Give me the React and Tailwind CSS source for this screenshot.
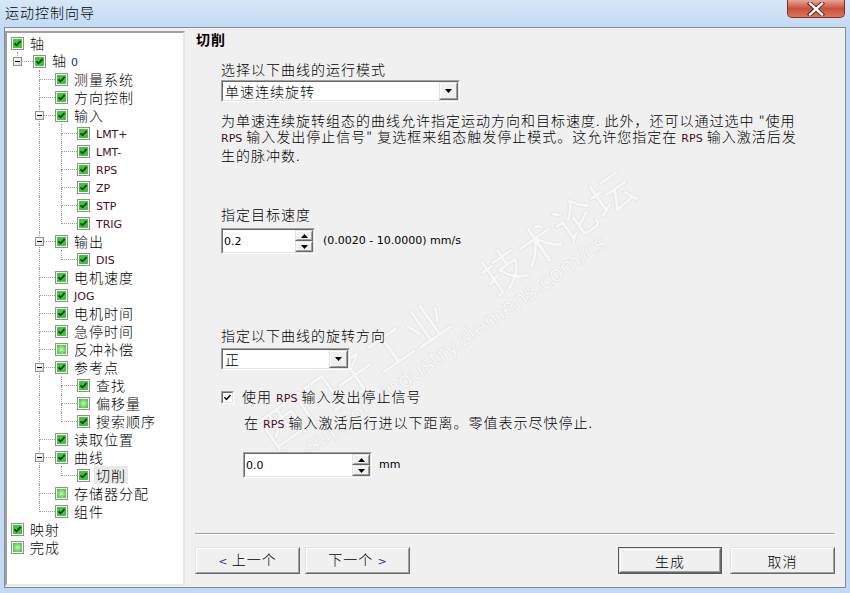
import React from 'react';

const latin = "font-['DejaVu_Sans',sans-serif] text-[11px] tracking-normal font-normal";

// tree data for the wizard navigation
const tree = [
  {
    label: '轴',
    checked: true,
    children: [
      {
        label: '轴 0',
        checked: true,
        children: [
          { label: '测量系统', checked: true },
          { label: '方向控制', checked: true },
          {
            label: '输入',
            checked: true,
            children: [
              { label: 'LMT+', checked: true },
              { label: 'LMT-', checked: true },
              { label: 'RPS', checked: true },
              { label: 'ZP', checked: true },
              { label: 'STP', checked: true },
              { label: 'TRIG', checked: true },
            ],
          },
          { label: '输出', checked: true, children: [{ label: 'DIS', checked: true }] },
          { label: '电机速度', checked: true },
          { label: 'JOG', checked: true },
          { label: '电机时间', checked: true },
          { label: '急停时间', checked: true },
          { label: '反冲补偿', checked: false },
          {
            label: '参考点',
            checked: true,
            children: [
              { label: '查找', checked: true },
              { label: '偏移量', checked: false },
              { label: '搜索顺序', checked: true },
            ],
          },
          { label: '读取位置', checked: true },
          { label: '曲线', checked: true, children: [{ label: '切削', checked: true, selected: true }] },
          { label: '存储器分配', checked: false },
          { label: '组件', checked: true },
        ],
      },
    ],
  },
  { label: '映射', checked: true },
  { label: '完成', checked: false },
];

function flatten(nodes, level, guides, out) {
  nodes.forEach((n, i) => {
    const last = i === nodes.length - 1;
    out.push({ ...n, level, guides, last });
    if (n.children) {
      flatten(n.children, level + 1, level === 0 ? [] : [...guides, !last], out);
    }
  });
  return out;
}

// splits latin runs out of a label so they get the small sans face
function Label({ text, latinClass = 'text-[#4a0c24]' }) {
  const parts = text.split(/([A-Za-z0-9+\-]+)/);
  return parts.map((p, i) =>
    /^[A-Za-z0-9+\-]+$/.test(p) ? (
      <span key={i} className={`${latin} ${latinClass}`}>
        {p}
      </span>
    ) : (
      <span key={i} className="text-black">{p}</span>
    )
  );
}

function TreeCheck({ checked }) {
  return (
    <div className="w-[13px] h-[13px] shrink-0 border border-[#8f8f8f] bg-white p-px">
      {checked ? (
        <div className="w-full h-full bg-[#3fc53a] flex items-center justify-center">
          <svg width="9" height="9" viewBox="0 0 9 9">
            <path d="M1.5 4.3 L3.6 6.4 L7.6 2.2" fill="none" stroke="#0b3f0b" strokeWidth="1.7" />
          </svg>
        </div>
      ) : (
        <div className="w-full h-full bg-[radial-gradient(circle,#c9f5b9_0%,#6fd962_55%,#34bd2e_100%)]" />
      )}
    </div>
  );
}

function Connector({ last, expander }) {
  return (
    <div className="relative w-[22px] h-full shrink-0">
      <div className="ml-[6px] w-[16px] h-[10px] border-l border-b border-dotted border-[#a0a0a0]" />
      {!last && <div className="ml-[6px] h-[8px] border-l border-dotted border-[#a0a0a0]" />}
      {expander && (
        <div className="absolute left-[2px] top-[5px] w-[9px] h-[9px] border border-[#919191] bg-gradient-to-br from-white to-[#dcdcdc] flex items-center justify-center">
          <div className="w-[5px] h-px bg-black" />
        </div>
      )}
    </div>
  );
}

function TreeRow({ row }) {
  return (
    <div className="flex items-center h-[18px] leading-[18px]">
      {row.guides.map((g, i) => (
        <div key={i} className="w-[22px] h-full shrink-0">
          {g && <div className="ml-[6px] h-full border-l border-dotted border-[#a0a0a0]" />}
        </div>
      ))}
      {row.level > 0 && <Connector last={row.last} expander={!!row.children} />}
      <TreeCheck checked={row.checked} />
      <span className={`ml-[4px] px-[2px] whitespace-nowrap ${row.selected ? 'bg-[#e9e9e9]' : ''}`}>
        <Label text={row.label} latinClass={row.label === '轴 0' ? 'text-[#16307a]' : 'text-[#4a0c24]'} />
      </span>
    </div>
  );
}

function Sunken({ className = '', children }) {
  return (
    <div className={`border border-t-[#a0a0a0] border-l-[#a0a0a0] border-b-white border-r-white ${className}`}>
      <div className="w-full h-full flex bg-white border border-t-[#696969] border-l-[#696969] border-b-[#e3e3e3] border-r-[#e3e3e3]">
        {children}
      </div>
    </div>
  );
}

function Raised({ className = '', children }) {
  return (
    <div className={`bg-[#f0f0f0] border border-t-[#e3e3e3] border-l-[#e3e3e3] border-b-[#696969] border-r-[#696969] ${className}`}>
      <div className="w-full h-full flex items-center justify-center border border-t-white border-l-white border-b-[#a0a0a0] border-r-[#a0a0a0]">
        {children}
      </div>
    </div>
  );
}

function Tri({ up, color = '#000' }) {
  return (
    <svg width="7" height="4" viewBox="0 0 7 4">
      <path d={up ? 'M0 4 L3.5 0 L7 4 Z' : 'M0 0 L7 0 L3.5 4 Z'} fill={color} />
    </svg>
  );
}

function Dropdown({ width, value }) {
  return (
    <Sunken className={`${width} h-[22px]`}>
      <div className="flex-1 pl-[2px] leading-[18px] whitespace-nowrap">{value}</div>
      <Raised className="w-[19px] h-full">
        <Tri />
      </Raised>
    </Sunken>
  );
}

function Spinner({ width, value }) {
  return (
    <Sunken className={`${width} h-[26px]`}>
      <div className={`flex-1 pl-px pt-[4px] ${latin}`}>{value}</div>
      <div className="w-[18px] flex flex-col">
        <Raised className="flex-1">
          <Tri up />
        </Raised>
        <Raised className="flex-1">
          <Tri />
        </Raised>
      </div>
    </Sunken>
  );
}

function Button({ width, children, isDefault }) {
  const inner = (
    <Raised className="w-full h-full">
      <span className="leading-[18px] whitespace-nowrap">{children}</span>
    </Raised>
  );
  return isDefault ? (
    <div className={`${width} h-[27px] border border-[#5a5a5a]`}>{inner}</div>
  ) : (
    <div className={`${width} h-[27px]`}>{inner}</div>
  );
}

function CloseButton() {
  return (
    <div className="ml-auto mr-[5px] w-[58px] h-[18px] rounded-b-[5px] border border-t-0 border-[#8a2c22] bg-gradient-to-b from-[#e8a597] via-[#c9503e] to-[#d9765a] flex items-center justify-center">
      <svg width="20" height="14" viewBox="0 0 20 14">
        <path d="M4 1.5 L16 12.5 M16 1.5 L4 12.5" stroke="#4a1a14" strokeWidth="4.2" strokeLinecap="square" />
        <path d="M4 1.5 L16 12.5 M16 1.5 L4 12.5" stroke="#ffffff" strokeWidth="2.4" strokeLinecap="square" />
      </svg>
    </div>
  );
}

const rps = <span className={`${latin} text-[10px] text-[#4a0c24]`}>RPS</span>;

export default function App() {
  const rows = flatten(tree, 0, [], []);

  return (
    <div className="w-[850px] h-[593px] overflow-hidden flex flex-col bg-[#c3daf2] text-black text-[14px] tracking-[1px] font-light font-['Noto_Sans_CJK_SC','Noto_Sans',sans-serif]">
      {/* title bar */}
      <div className="h-[27px] shrink-0 flex items-start bg-gradient-to-b from-[#d6e7f8] to-[#c3daf2]">
        <div className="pl-[5px] pt-[3px] leading-[18px]">运动控制向导</div>
        <CloseButton />
      </div>

      {/* client area */}
      <div className="flex-1 min-h-0 mx-[4px] mb-[5px] flex bg-[#f0f0f0] border border-[#7f8c9b]">
        {/* tree */}
        <div className="w-[180px] mt-[3px] mb-px shrink-0 bg-white border-2 border-t-[#a0a0a0] border-l-[#a0a0a0] border-b-[#e8e8e8] border-r-[#e8e8e8]">
          <div className="pl-[4px] pt-px">
            {rows.map((r, i) => (
              <TreeRow key={i} row={r} />
            ))}
          </div>
        </div>

        {/* page */}
        <div className="relative flex-1 flex flex-col overflow-hidden">
          {/* watermark */}
          <div className="pointer-events-none absolute left-[105px] top-[375px] origin-bottom-left -rotate-[35deg] whitespace-nowrap text-[#f7f7f7] [text-shadow:0_0_1px_rgba(0,0,0,0.22)] tracking-normal font-normal">
            <div className="text-[44px] leading-[48px]">
              西门子工业<span className="ml-[50px]">技术论坛</span>
            </div>
            <div className="ml-[30px] font-['DejaVu_Sans',sans-serif] text-[22px] leading-[24px]">
              support.industry.siemens.com/cs
            </div>
          </div>

          <div className="relative pl-[11px] pt-[2px] font-bold leading-[18px]">切削</div>

          <div className="relative pl-[36px] flex flex-col items-start">
            <div className="mt-[12px] leading-[18px]">选择以下曲线的运行模式</div>
            <div className="mt-[2px]">
              <Dropdown width="w-[239px]" value="单速连续旋转" />
            </div>

            <div className="mt-[10px] leading-[16px] whitespace-nowrap">
              为单速连续旋转组态的曲线允许指定运动方向和目标速度. 此外，还可以通过选中 "使用
              <br />
              {rps} 输入发出停止信号" 复选框来组态触发停止模式。这允许您指定在 {rps} 输入激活后发
              <br />
              生的脉冲数.
            </div>

            <div className="mt-[42px] leading-[18px]">指定目标速度</div>
            <div className="mt-[5px] flex items-center">
              <Spinner width="w-[94px]" value="0.2" />
              <span className={`ml-[8px] ${latin}`}>(0.0020 - 10.0000) mm/s</span>
            </div>

            <div className="mt-[72px] leading-[18px]">指定以下曲线的旋转方向</div>
            <div className="mt-[4px]">
              <Dropdown width="w-[129px]" value="正" />
            </div>

            <div className="mt-[18px] flex items-center h-[18px]">
              <Sunken className="w-[13px] h-[13px]">
                <svg width="9" height="9" viewBox="0 0 9 9" className="m-auto">
                  <path d="M1.5 4.2 L3.5 6.4 L7.5 2" fill="none" stroke="#000" strokeWidth="1.5" />
                </svg>
              </Sunken>
              <span className="ml-[8px] leading-[18px]">使用 {rps} 输入发出停止信号</span>
            </div>

            <div className="mt-[7px] ml-[23px] leading-[18px] whitespace-nowrap">
              在 {rps} 输入激活后行进以下距离。零值表示尽快停止.
            </div>

            <div className="mt-[18px] ml-[22px] flex items-center">
              <Spinner width="w-[129px]" value="0.0" />
              <span className={`ml-[7px] ${latin}`}>mm</span>
            </div>
          </div>

          <div className="flex-1" />

          <div className="relative mx-[10px] border-t border-t-[#a0a0a0] border-b border-b-white" />

          <div className="relative mt-[12px] mb-[13px] pl-[10px] pr-[10px] flex">
            <Button width="w-[105px]">
              <span className={`${latin} text-[#1c3c8c]`}>&lt;</span> 上一个
            </Button>
            <div className="ml-[5px]">
              <Button width="w-[105px]">
                下一个 <span className={`${latin} text-[#1c3c8c]`}>&gt;</span>
              </Button>
            </div>
            <div className="ml-auto">
              <Button width="w-[104px]" isDefault>
                生成
              </Button>
            </div>
            <div className="ml-[8px]">
              <Button width="w-[105px]">取消</Button>
            </div>
          </div>
        </div>
      </div>
    </div>
  );
}
